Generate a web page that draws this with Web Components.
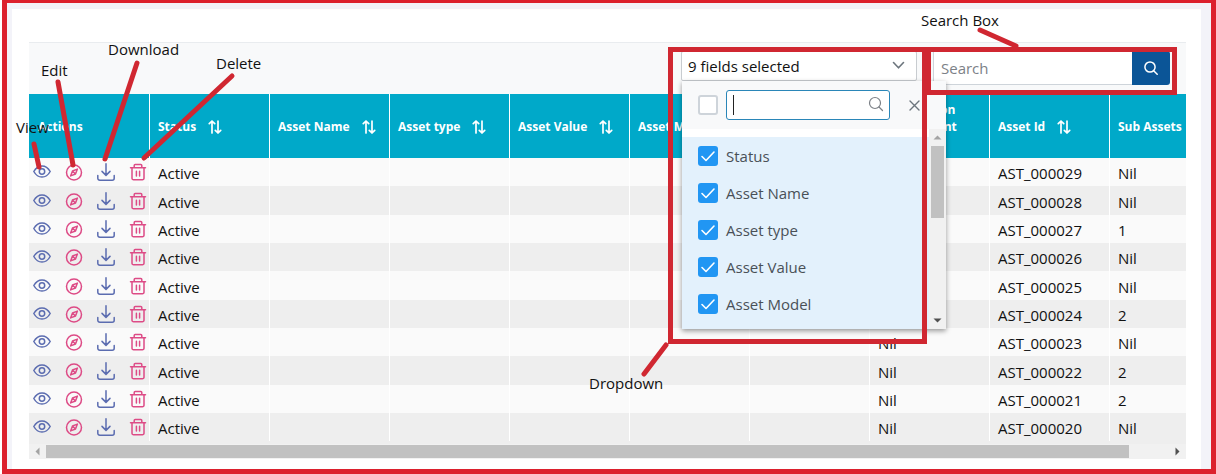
<!DOCTYPE html>
<html lang="en">
<head>
<meta charset="utf-8">
<meta name="viewport" content="width=device-width, initial-scale=1">
<title>Assets</title>
<style>
  body { margin: 0; background: #fff; color: #111; font: 15px/20px "Open Sans", "Noto Sans", sans-serif; }
</style>
</head>
<body>
<asset-page>
  <asset-toolbar>
    <field-picker></field-picker>
    <search-box></search-box>
  </asset-toolbar>
  <asset-grid></asset-grid>
  <asset-notes slot="notes"></asset-notes>
</asset-page>

<script>
function define(name, html, setup) {
  const template = document.createElement('template');
  template.innerHTML = html;
  customElements.define(name, class extends HTMLElement {
    constructor() {
      super();
      const root = this.attachShadow({ mode: 'open' });
      root.append(template.content.cloneNode(true));
      if (setup) setup(root);
    }
  });
}

/* Red frame, tinted gutter and white card */
define('asset-page', `
  <style>
    :host { display: flex; position: relative; box-sizing: border-box; min-height: 100vh; margin-left: 2px;
      border: 5px solid #dc202d; border-top-width: 3px; padding: 6px 10px 0 5px; background: #f3f3f9; }
    main { flex: 1; min-width: 0; padding: 33px 15px 10px 17px; background: #fff; }
  </style>
  <main><slot></slot></main>
  <slot name="notes"></slot>`);

define('asset-toolbar', `
  <style>
    :host { display: flex; position: relative; z-index: 1; justify-content: flex-end; align-items: flex-start; gap: 16px;
      box-sizing: border-box; height: 52px; padding: 8px 16px 0; background: #f8f9fa; border-top: 1px solid #e9ecef; }
  </style>
  <slot></slot>`);

define('search-box', `
  <style>
    :host { display: block; }
    form { display: flex; height: 34px; width: 237px; margin: 0; }
    input { flex: 1; min-width: 0; box-sizing: border-box; margin: 0; padding: 0 7px; border: 1px solid #ced4da; border-right: 0;
      font: inherit; background: #fff; outline: 0; }
    input::placeholder { color: #7c8187; opacity: 1; }
    button { width: 38px; padding: 0; border: 0; border-radius: 0 3px 3px 0; background: #0b5597; color: #fff; display: grid; place-items: center; }
  </style>
  <form role="search">
    <input type="text" placeholder="Search" aria-label="Search">
    <button type="button" aria-label="Search">
      <svg width="14" height="14" viewBox="0 0 14 14" fill="none" stroke="currentColor" stroke-width="1.5" stroke-linecap="round"><circle cx="6" cy="6" r="5.1"/><path d="M9.7 9.7 13.2 13.2"/></svg>
    </button>
  </form>`);

/* Select with an open multi-select panel beneath it */
define('field-picker', `
  <style>
    :host { display: block; position: relative; width: 236px; }
    .control { position: relative; display: block; }
    select { appearance: none; box-sizing: border-box; width: 100%; height: 30px; margin: 0; padding: 0 6px; border: 1px solid #c8ccd0;
      border-radius: 2px; background: #fff; color: #111; font: inherit; display: block; }
    .control svg { position: absolute; right: 12px; top: 10px; pointer-events: none; }
  </style>
  <div class="control">
    <select aria-label="Fields"><option>9 fields selected</option></select>
    <svg width="13" height="9" viewBox="0 0 13 9" fill="none" stroke="#6c757d" stroke-width="1.6" stroke-linecap="round" stroke-linejoin="round"><path d="M1.5 1.5 6.5 6.8 11.5 1.5"/></svg>
  </div>
  <field-menu></field-menu>`);

define('field-menu', `
  <style>
    :host { display: block; position: absolute; top: 30px; left: 1px; width: 264px; background: #fff;
      box-shadow: 0 2px 5px rgba(0, 0, 0, .4); color: #495057; }
    header { display: flex; align-items: center; gap: 8px; height: 48px; padding: 0 24px 0 16px; background: #f8f9fa; }
    input[type=checkbox] { appearance: none; flex: none; box-sizing: border-box; width: 20px; height: 20px; margin: 0;
      border: 2px solid #ced4da; border-radius: 3px; background: #fff; }
    input[type=checkbox]:checked { border: 0; background: #2196f3 url("data:image/svg+xml,%3Csvg xmlns='http://www.w3.org/2000/svg' viewBox='0 0 20 20' fill='none' stroke='white' stroke-width='1.6' stroke-linecap='round' stroke-linejoin='round'%3E%3Cpath d='M4 10.5 8 14.5 16 6'/%3E%3C/svg%3E"); }
    .filter { position: relative; width: 164px; }
    .filter input { box-sizing: border-box; width: 100%; height: 30px; margin: 0; padding: 0 28px 0 6px; border: 1px solid #2a86b8;
      border-radius: 3px; background: #fff; font: inherit; outline: 0; display: block; }
    .filter::before { content: ""; position: absolute; left: 7px; top: 5px; width: 1px; height: 20px; background: #222; }
    .filter svg { position: absolute; right: 6px; top: 6px; }
    header button { flex: none; margin-left: 10px; width: 13px; height: 13px; padding: 0; border: 0; background: none; display: block; }
    .body { display: flex; height: 200px; }
    ul { flex: 1; box-sizing: border-box; margin: 8px 0 0; padding: 0; list-style: none; background: #e3f1fc; }
    label { display: flex; align-items: center; gap: 8px; height: 37px; padding-left: 16px; }
    .bar { display: flex; flex-direction: column; align-items: center; width: 17px; background: #f1f1f1; }
    .bar svg { display: block; height: 17px; }
    .thumb { width: 13px; height: 72px; background: #c1c1c1; margin-bottom: auto; }
  </style>
  <header>
    <input type="checkbox" aria-label="All fields">
    <div class="filter">
      <input type="text" aria-label="Filter fields">
      <svg width="16" height="16" viewBox="0 0 16 16" fill="none" stroke="#7c8187" stroke-width="1.2" stroke-linecap="round"><circle cx="7" cy="7" r="5.5"/><path d="M11 11 14.5 14.5"/></svg>
    </div>
    <button type="button" aria-label="Close"><svg width="13" height="13" viewBox="0 0 13 13" stroke="#6c757d" stroke-width="1.4" stroke-linecap="round" style="display:block"><path d="M2 2 11 11M11 2 2 11"/></svg></button>
  </header>
  <div class="body">
    <ul></ul>
    <div class="bar">
      <svg width="17" viewBox="0 0 17 17"><path d="M4.5 10.5 8.5 6.5 12.5 10.5z" fill="#a3a3a3"/></svg>
      <div class="thumb"></div>
      <svg width="17" viewBox="0 0 17 17"><path d="M4.5 6.5 8.5 10.5 12.5 6.5z" fill="#505050"/></svg>
    </div>
  </div>`, root => {
  root.querySelector('ul').innerHTML = ['Status', 'Asset Name', 'Asset type', 'Asset Value', 'Asset Model']
    .map(t => `<li><label><input type="checkbox" checked>${t}</label></li>`).join('');
});

define('sort-icon', `
  <style>:host { display: inline-block; width: 14px; height: 14px; vertical-align: middle; } svg { display: block; }</style>
  <svg width="14" height="14" viewBox="0 0 14 14" fill="none" stroke="currentColor" stroke-width="1.7" stroke-linecap="round" stroke-linejoin="round"><path d="M4 13V1M1.3 3.7 4 1l2.7 2.7M10 1v12M7.3 10.3 10 13l2.7-2.7"/></svg>`);

/* View, edit, download and delete buttons of one row */
define('row-actions', `
  <style>
    :host { display: flex; gap: 14px; }
    button { width: 18px; height: 18px; padding: 0; border: 0; background: none; color: #5b6cb0; }
    button.pink { color: #dd4b86; }
    svg { display: block; fill: none; stroke: currentColor; stroke-width: 1.5; stroke-linecap: round; stroke-linejoin: round; }
  </style>
  <button type="button" aria-label="View"><svg width="18" height="18" viewBox="0 0 18 18"><path d="M.8 8.5C2.8 5 5.6 2.9 9 2.9s6.200 2.100 8.200 5.600C15.200 12 12.400 14.100 9 14.100S2.800 12 .8 8.500z"/><circle cx="9" cy="8.500" r="2.700"/></svg></button>
  <button type="button" class="pink" aria-label="Edit"><svg width="18" height="18" viewBox="0 0 18 18"><circle cx="9" cy="9.500" r="7.500"/><path d="M12.400 6.100 10.500 11 5.600 12.900 7.500 8z M7.500 8l3 3"/></svg></button>
  <button type="button" aria-label="Download"><svg width="18" height="18" viewBox="0 0 18 18"><path d="M9 .8v11.400M5 8.400l4 4 4-4M.8 12.500v2.700a2 2 0 0 0 2 2h12.400a2 2 0 0 0 2-2v-2.700"/></svg></button>
  <button type="button" class="pink" aria-label="Delete"><svg width="18" height="18" viewBox="0 0 18 18"><path d="M1.500 4.800h15M3 4.800v10.400a1.600 1.600 0 0 0 1.600 1.600h8.800a1.600 1.600 0 0 0 1.600-1.600V4.800M5.200 4.800V2.500a1 1 0 0 1 1-1h5.600a1 1 0 0 1 1 1v2.300M7.400 8.200v4.800M10.600 8.200v4.800"/></svg></button>`);

define('asset-grid', `
  <style>
    :host { display: block; }
    .view { overflow: hidden; padding-bottom: 3px; background: #eee; }
    table { table-layout: fixed; width: 100%; min-width: 1200px; border-collapse: separate; border-spacing: 0; }
    th, td { box-sizing: border-box; padding: 0 8px; text-align: left; border-left: 1px solid #fff; }
    th:first-child, td:first-child { border-left-color: transparent; }
    th { height: 64px; background: #00a9c9; color: #fff; font-size: 12px; line-height: 17px; font-weight: 700; }
    td { height: 28px; padding-top: 2px; background: #fafafa; white-space: nowrap; }
    tr:nth-child(3n+2) td { height: 29px; }
    tr:nth-child(even) td { background: #eee; }
    td:first-child { padding: 0 0 0 3px; }
    th sort-icon { margin-left: 9px; }
    th br + sort-icon { margin-left: 0; }
    .bar { display: flex; align-items: center; height: 15px; background: #f1f1f1; }
    .bar svg { flex: none; display: block; }
    .track { flex: 1; display: flex; }
    .thumb { flex: 27; height: 13px; background: #c1c1c1; }
    .rest { flex: 1; }
  </style>
  <div class="view">
    <table>
      <thead><tr>
        <th>Actions</th>
        <th>Status <sort-icon></sort-icon></th>
        <th>Asset Name <sort-icon></sort-icon></th>
        <th>Asset type <sort-icon></sort-icon></th>
        <th>Asset Value <sort-icon></sort-icon></th>
        <th>Asset Model</th>
        <th></th>
        <th>Depreciation<br>Replacement<br><sort-icon></sort-icon></th>
        <th>Asset Id <sort-icon></sort-icon></th>
        <th>Sub Assets</th>
      </tr></thead>
      <tbody></tbody>
    </table>
  </div>
  <div class="bar">
    <svg width="17" height="15" viewBox="0 0 17 15"><path d="M10.500 3.500 6.500 7.500l4 4z" fill="#a3a3a3"/></svg>
    <div class="track"><div class="thumb"></div><div class="rest"></div></div>
    <svg width="17" height="15" viewBox="0 0 17 15"><path d="M6.500 3.500l4 4-4 4z" fill="#505050"/></svg>
  </div>`, root => {
  const sub = ['Nil', 'Nil', '1', 'Nil', 'Nil', '2', 'Nil', '2', '2', 'Nil'];
  root.querySelector('tbody').innerHTML = sub.map((s, i) =>
    `<tr><td><row-actions></row-actions></td><td>Active</td><td></td><td></td><td></td><td></td><td></td><td>Nil</td><td>AST_0000${29 - i}</td><td>${s}</td></tr>`).join('');
});

/* Callouts drawn over the page: one group holds to the left edge, the other to the right */
define('asset-notes', `
  <style>
    :host { position: absolute; z-index: 2; inset: -3px -5px -5px -7px; overflow: hidden; pointer-events: none; color: #111; }
    .group { position: absolute; top: 0; height: 474px; }
    .left { left: 0; width: 300px; }
    .right { right: 0; width: 656px; }
    svg { position: absolute; inset: 0; fill: none; stroke: #d02731; stroke-width: 5; stroke-linecap: round; }
    span { position: absolute; white-space: nowrap; }
  </style>
  <div class="group left">
    <svg width="300" height="474"><path d="M34 144l5 23M58 82l15 83M137 63l-32 96M232 76l-88 82"/></svg>
    <span style="left:16px;top:117px">View</span>
    <span style="left:41px;top:60px">Edit</span>
    <span style="left:108px;top:39px">Download</span>
    <span style="left:216px;top:53px">Delete</span>
  </div>
  <div class="group right">
    <svg width="656" height="474"><path d="M420 30l36 16M106 345l-22 29"/>
      <g stroke-linecap="butt"><rect x="110.500" y="49.500" width="254" height="292"/><rect x="368.500" y="49.500" width="246" height="43"/></g></svg>
    <span style="left:361px;top:10px">Search Box</span>
    <span style="left:29px;top:373px">Dropdown</span>
  </div>`);
</script>
</body>
</html>
